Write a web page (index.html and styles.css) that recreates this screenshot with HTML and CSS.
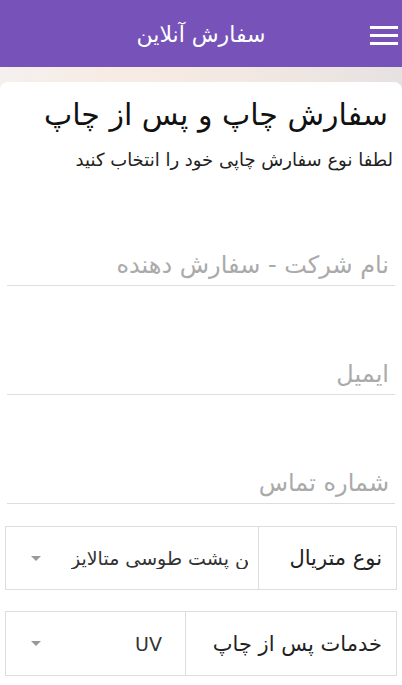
FILE: index.html
```html
<!DOCTYPE html>
<html lang="fa" dir="rtl">
<head>
  <meta charset="UTF-8">
  <meta name="viewport" content="width=device-width, initial-scale=1.0">
  <title>سفارش آنلاین</title>
  <link rel="stylesheet" href="styles.css">
</head>
<body>
  <div class="header">
    <h1>سفارش آنلاین</h1>
    <button class="menu-btn" aria-label="menu">
      <span></span><span></span><span></span>
    </button>
  </div>

  <div class="backdrop">
    <div class="card">
      <h2 class="title">سفارش چاپ و پس از چاپ</h2>
      <p class="subtitle">لطفا نوع سفارش چاپی خود را انتخاب کنید</p>

      <div class="field first">
        <input type="text" placeholder="نام شرکت - سفارش دهنده">
      </div>
      <div class="field">
        <input type="email" placeholder="ایمیل">
      </div>
      <div class="field">
        <input type="tel" placeholder="شماره تماس">
      </div>

      <div class="select-row">
        <div class="select-label">نوع متریال</div>
        <div class="select-value">
          <span class="value-text">کارتن پشت طوسی متالایز</span>
          <span class="arrow"></span>
        </div>
      </div>

      <div class="select-row service">
        <div class="select-label">خدمات پس از چاپ</div>
        <div class="select-value">
          <span class="value-text">UV</span>
          <span class="arrow"></span>
        </div>
      </div>
    </div>
  </div>
</body>
</html>
```

FILE: styles.css
```css
body {
  font-family: "DejaVu Sans", sans-serif;
  margin: 0;
  padding: 0;
  background-color: #fff;
  overflow: hidden;
}
.header {
  background-color: #7652b9;
  color: white;
  height: 67px;
  display: flex;
  align-items: center;
  justify-content: center;
  position: relative;
}
.header h1 {
  margin: 2px 0 0 0;
  font-size: 22px;
  font-weight: normal;
  line-height: 30px;
}
.menu-btn {
  position: absolute;
  right: 4px;
  top: 26px;
  background: none;
  border: none;
  padding: 0;
  width: 28px;
  display: flex;
  flex-direction: column;
  gap: 5px;
}
.menu-btn span {
  display: block;
  height: 3px;
  background-color: white;
}
.backdrop {
  background: linear-gradient(90deg, #f4f0ee 0%, #f8ebe3 30%, #f3e8e2 60%, #e6e2e1 100%);
  padding-top: 15px;
}
.card {
  background-color: white;
  border-radius: 8px 8px 0 0;
  padding: 13px 7px 20px 7px;
}
.title {
  margin: 0 7px 0 0;
  font-size: 30px;
  font-weight: normal;
  color: #111;
  line-height: 40px;
}
.subtitle {
  margin: 13px 2px 0 0;
  font-size: 18px;
  line-height: 24px;
  color: #222;
}
.field {
  margin-top: 68px;
  border-bottom: 1px solid #ddd;
}
.field.first {
  margin-top: 73px;
}
.field input {
  display: block;
  width: 100%;
  height: 40px;
  border: none;
  outline: none;
  font-family: inherit;
  font-size: 24px;
  padding: 0 6px;
  box-sizing: border-box;
  background: none;
  direction: rtl;
}
.field input::placeholder {
  color: #aaa;
}
.select-row {
  display: flex;
  margin: 22px -2px 0 -2px;
  border: 1px solid #ddd;
  height: 64px;
  box-sizing: border-box;
}
.select-row.service {
  margin-top: 21px;
  height: 65px;
}
.select-label {
  width: 138px;
  border-left: 1px solid #ddd;
  display: flex;
  align-items: center;
  padding-right: 14px;
  box-sizing: border-box;
  font-size: 21px;
  color: #222;
}
.service .select-label {
  width: 211px;
}
.select-value {
  flex: 1;
  min-width: 0;
  display: flex;
  align-items: center;
  padding: 0 10px 0 25px;
  font-size: 19px;
  color: #333;
}
.service .select-value {
  padding-right: 23px;
}
/* select text starts from the left and gets cut on the right, like the native control */
.value-text {
  flex: 1;
  min-width: 0;
  white-space: nowrap;
  overflow: hidden;
  direction: ltr;
  text-align: right;
}
.arrow {
  width: 0;
  height: 0;
  border-left: 5px solid transparent;
  border-right: 5px solid transparent;
  border-top: 5px solid #999;
  flex-shrink: 0;
  margin-right: 30px;
}
```
